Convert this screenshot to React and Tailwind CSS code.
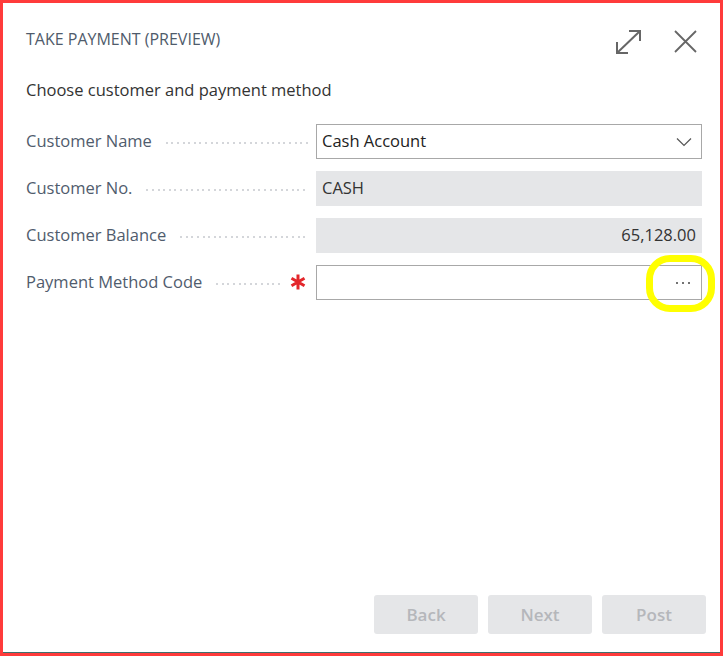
import React from "react";

const font = { fontFamily: '"Open Sans", "Noto Sans", sans-serif' };

const DOTS = Array.from({ length: 40 });

function Leader() {
  return (
    <div className="flex-1 ml-[14px] mr-[3px] h-[4px] self-center overflow-hidden flex items-center gap-[3.6px] mt-[2px]">
      {DOTS.map((_, i) => (
        <span key={i} className="w-[2px] h-[2px] shrink-0 rounded-full bg-[#c6c9ce]" />
      ))}
    </div>
  );
}

function Row({ label, children, required }) {
  return (
    <div className="flex items-center h-[35px]">
      <div className="flex items-center w-[290px] text-[16.5px] text-[#505c6d] leading-none">
        <span className="whitespace-nowrap">{label}</span>
        <Leader />
        {required ? (
          <svg width="16" height="16" viewBox="0 0 16 16" className="ml-[6px] mr-[10px] shrink-0 -mt-[2px]" stroke="#e3262b" strokeWidth="3" strokeLinecap="butt">
            <path d="M8 0.5 V15.5 M1.5 4.2 L14.5 11.8 M14.5 4.2 L1.5 11.8" />
          </svg>
        ) : (
          <span className="w-[4px]" />
        )}
      </div>
      {children}
    </div>
  );
}

export default function App() {
  return (
    <div className="w-[723px] h-[656px] border-[3px] border-[#ff3b3b] bg-white" style={font}>
      <div className="relative h-full border-b border-[#3f6f6d] flex flex-col">
        {/* header */}
        <div className="flex items-start pl-[23px] pr-[22px] pt-[26px]">
          <div className="text-[16px] text-[#4f5b6b] leading-[20px] mt-[0px]">TAKE PAYMENT (PREVIEW)</div>
          <div className="flex-1" />
          <svg width="27" height="26" viewBox="0 0 27 26" className="mt-[0px] mr-[31px]" fill="none" stroke="#666" strokeWidth="2">
            <path d="M2 24 L25 2" />
            <path d="M14 2 H25 V12" />
            <path d="M2 13 V24 H13" />
          </svg>
          <svg width="25" height="25" viewBox="0 0 25 25" className="mt-[0px]" fill="none" stroke="#666" strokeWidth="1.8">
            <path d="M2 2 L23 23 M23 2 L2 23" />
          </svg>
        </div>
        <div className="pl-[23px] mt-[24px] text-[16.5px] text-[#333] leading-[22px]">Choose customer and payment method</div>
        <div className="pl-[23px] pr-[18px] mt-[23px] flex flex-col gap-[12px]">
          <Row label="Customer Name">
            <div className="flex-1 h-[35px] border border-[#a8a8a8] flex items-center px-[5px] text-[16.5px] text-[#222]">
              <span className="flex-1">Cash Account</span>
              <svg width="16" height="10" viewBox="0 0 16 10" fill="none" stroke="#555" strokeWidth="1.2" className="mr-[4px]">
                <path d="M1 1.5 L8 8.5 L15 1.5" />
              </svg>
            </div>
          </Row>
          <Row label="Customer No.">
            <div className="flex-1 h-[35px] bg-[#e5e6e8] flex items-center px-[6px] text-[16.5px] text-[#333]">CASH</div>
          </Row>
          <Row label="Customer Balance">
            <div className="flex-1 h-[35px] bg-[#e5e6e8] flex items-center justify-end px-[6px] text-[16.5px] text-[#333]">65,128.00</div>
          </Row>
          <Row label="Payment Method Code" required>
            <div className="flex-1 h-[35px] border border-[#a8a8a8] flex items-center justify-end pr-[11px] gap-[4px]">
              <span className="w-[2px] h-[2px] bg-[#444] rounded-full" />
              <span className="w-[2px] h-[2px] bg-[#444] rounded-full" />
              <span className="w-[2px] h-[2px] bg-[#444] rounded-full" />
            </div>
          </Row>
        </div>
        <div className="flex-1" />
        <div className="flex justify-end gap-[10px] pr-[14px] pb-[18px]">
          {["Back", "Next", "Post"].map((t) => (
            <div key={t} className="w-[104px] h-[39px] rounded-[3px] bg-[#e5e6e8] flex items-center justify-center text-[17px] font-semibold text-[#b5b7bb]">
              {t}
            </div>
          ))}
        </div>
        {/* yellow highlight */}
        <div className="absolute left-[643px] top-[252px] w-[69px] h-[57px] border-[7px] border-[#ffff00] rounded-[24px]" />
      </div>
    </div>
  );
}
